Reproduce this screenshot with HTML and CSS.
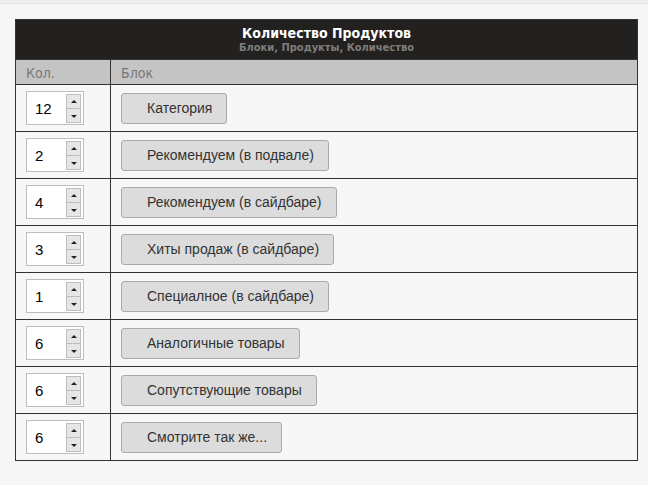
FILE: index.html
```html
<!DOCTYPE html>
<html lang="ru">
<head>
    <meta charset="UTF-8">
    <title>Количество Продуктов</title>
    <link rel="stylesheet" href="styles.css">
</head>
<body>
    <div class="topbar"></div>

    <div class="wrap">
        <table class="qty-table">
            <thead>
                <tr>
                    <th colspan="2" class="caption">
                        <div class="caption-title">Количество Продуктов</div>
                        <div class="caption-sub">Блоки, Продукты, Количество</div>
                    </th>
                </tr>
                <tr class="cols">
                    <th class="col-qty">Кол.</th>
                    <th>Блок</th>
                </tr>
            </thead>
            <tbody>
                <tr>
                    <td><span class="spin"><input type="text" value="12"><span class="arrows"><b class="up"></b><b class="down"></b></span></span></td>
                    <td><button type="button">Категория</button></td>
                </tr>
                <tr>
                    <td><span class="spin"><input type="text" value="2"><span class="arrows"><b class="up"></b><b class="down"></b></span></span></td>
                    <td><button type="button">Рекомендуем (в подвале)</button></td>
                </tr>
                <tr>
                    <td><span class="spin"><input type="text" value="4"><span class="arrows"><b class="up"></b><b class="down"></b></span></span></td>
                    <td><button type="button">Рекомендуем (в сайдбаре)</button></td>
                </tr>
                <tr>
                    <td><span class="spin"><input type="text" value="3"><span class="arrows"><b class="up"></b><b class="down"></b></span></span></td>
                    <td><button type="button">Хиты продаж (в сайдбаре)</button></td>
                </tr>
                <tr>
                    <td><span class="spin"><input type="text" value="1"><span class="arrows"><b class="up"></b><b class="down"></b></span></span></td>
                    <td><button type="button">Специалное (в сайдбаре)</button></td>
                </tr>
                <tr>
                    <td><span class="spin"><input type="text" value="6"><span class="arrows"><b class="up"></b><b class="down"></b></span></span></td>
                    <td><button type="button">Аналогичные товары</button></td>
                </tr>
                <tr>
                    <td><span class="spin"><input type="text" value="6"><span class="arrows"><b class="up"></b><b class="down"></b></span></span></td>
                    <td><button type="button">Сопутствующие товары</button></td>
                </tr>
                <tr>
                    <td><span class="spin"><input type="text" value="6"><span class="arrows"><b class="up"></b><b class="down"></b></span></span></td>
                    <td><button type="button">Смотрите так же...</button></td>
                </tr>
            </tbody>
        </table>
    </div>
</body>
</html>
```

FILE: styles.css
```css
/* General Styles */
body {
    margin: 0;
    padding: 0;
    background: #f6f6f6;
    font-family: "Liberation Sans", Arial, sans-serif;
    color: #333;
}

.topbar {
    height: 3px;
    border-bottom: 1px solid #e2e2e2;
    background: #efefef;
}

.wrap {
    padding: 15px 10px 20px 15px;
}

/* Table */
.qty-table {
    width: 623px;
    border-collapse: collapse;
    border: 1px solid #333;
}

.qty-table th,
.qty-table td {
    border: 1px solid #333;
    padding: 0;
    text-align: left;
}

.qty-table .caption {
    height: 39px;
    background: #22211f;
    text-align: center;
    font-family: "DejaVu Sans Condensed", "DejaVu Sans", sans-serif;
    vertical-align: middle;
}

.caption-title {
    color: #fff;
    font-size: 14px;
    font-weight: bold;
    line-height: 16px;
}

.caption-sub {
    color: #7d7d7d;
    font-size: 11px;
    font-weight: bold;
    line-height: 13px;
}

.qty-table .cols th {
    height: 22px;
    background: #c4c4c4;
    color: #777;
    font-family: "DejaVu Sans Condensed", "DejaVu Sans", sans-serif;
    font-size: 14px;
    font-weight: normal;
    padding: 2px 0 0 10px;
    vertical-align: middle;
}

.qty-table .cols .col-qty {
    width: 84px;
}

.qty-table tbody td {
    height: 46px;
    background: #f7f7f7;
    padding: 0 0 0 10px;
    vertical-align: middle;
}

/* Spinner */
.spin {
    display: inline-flex;
    align-items: center;
    width: 58px;
    height: 34px;
    border: 1px solid #bdbdbd;
    background: #fff;
    box-sizing: border-box;
    vertical-align: middle;
}

.spin input {
    width: 30px;
    border: none;
    outline: none;
    padding: 0 0 0 8px;
    font-family: "Liberation Sans", Arial, sans-serif;
    font-size: 15px;
    color: #000;
    background: transparent;
}

.arrows {
    display: flex;
    flex-direction: column;
    margin-left: 1px;
    gap: 1px;
    background: #bdbdbd;
    border: 1px solid #bdbdbd;
}

.arrows b {
    display: block;
    width: 13px;
    height: 13px;
    background: #e6e6e6;
    position: relative;
}

.arrows b::after {
    content: "";
    position: absolute;
    left: 4px;
    border-left: 3px solid transparent;
    border-right: 3px solid transparent;
}

.arrows .up::after {
    top: 5px;
    border-bottom: 3px solid #222;
}

.arrows .down::after {
    top: 6px;
    border-top: 3px solid #222;
}

/* Buttons */
button {
    height: 31px;
    padding: 0 14px 0 25px;
    border: 1px solid #aaa;
    border-radius: 3px;
    background: #dcdcdc;
    color: #333;
    font-family: "Liberation Sans", Arial, sans-serif;
    font-size: 14px;
    vertical-align: middle;
    cursor: pointer;
}

button:hover {
    background: #d2d2d2;
}
```
